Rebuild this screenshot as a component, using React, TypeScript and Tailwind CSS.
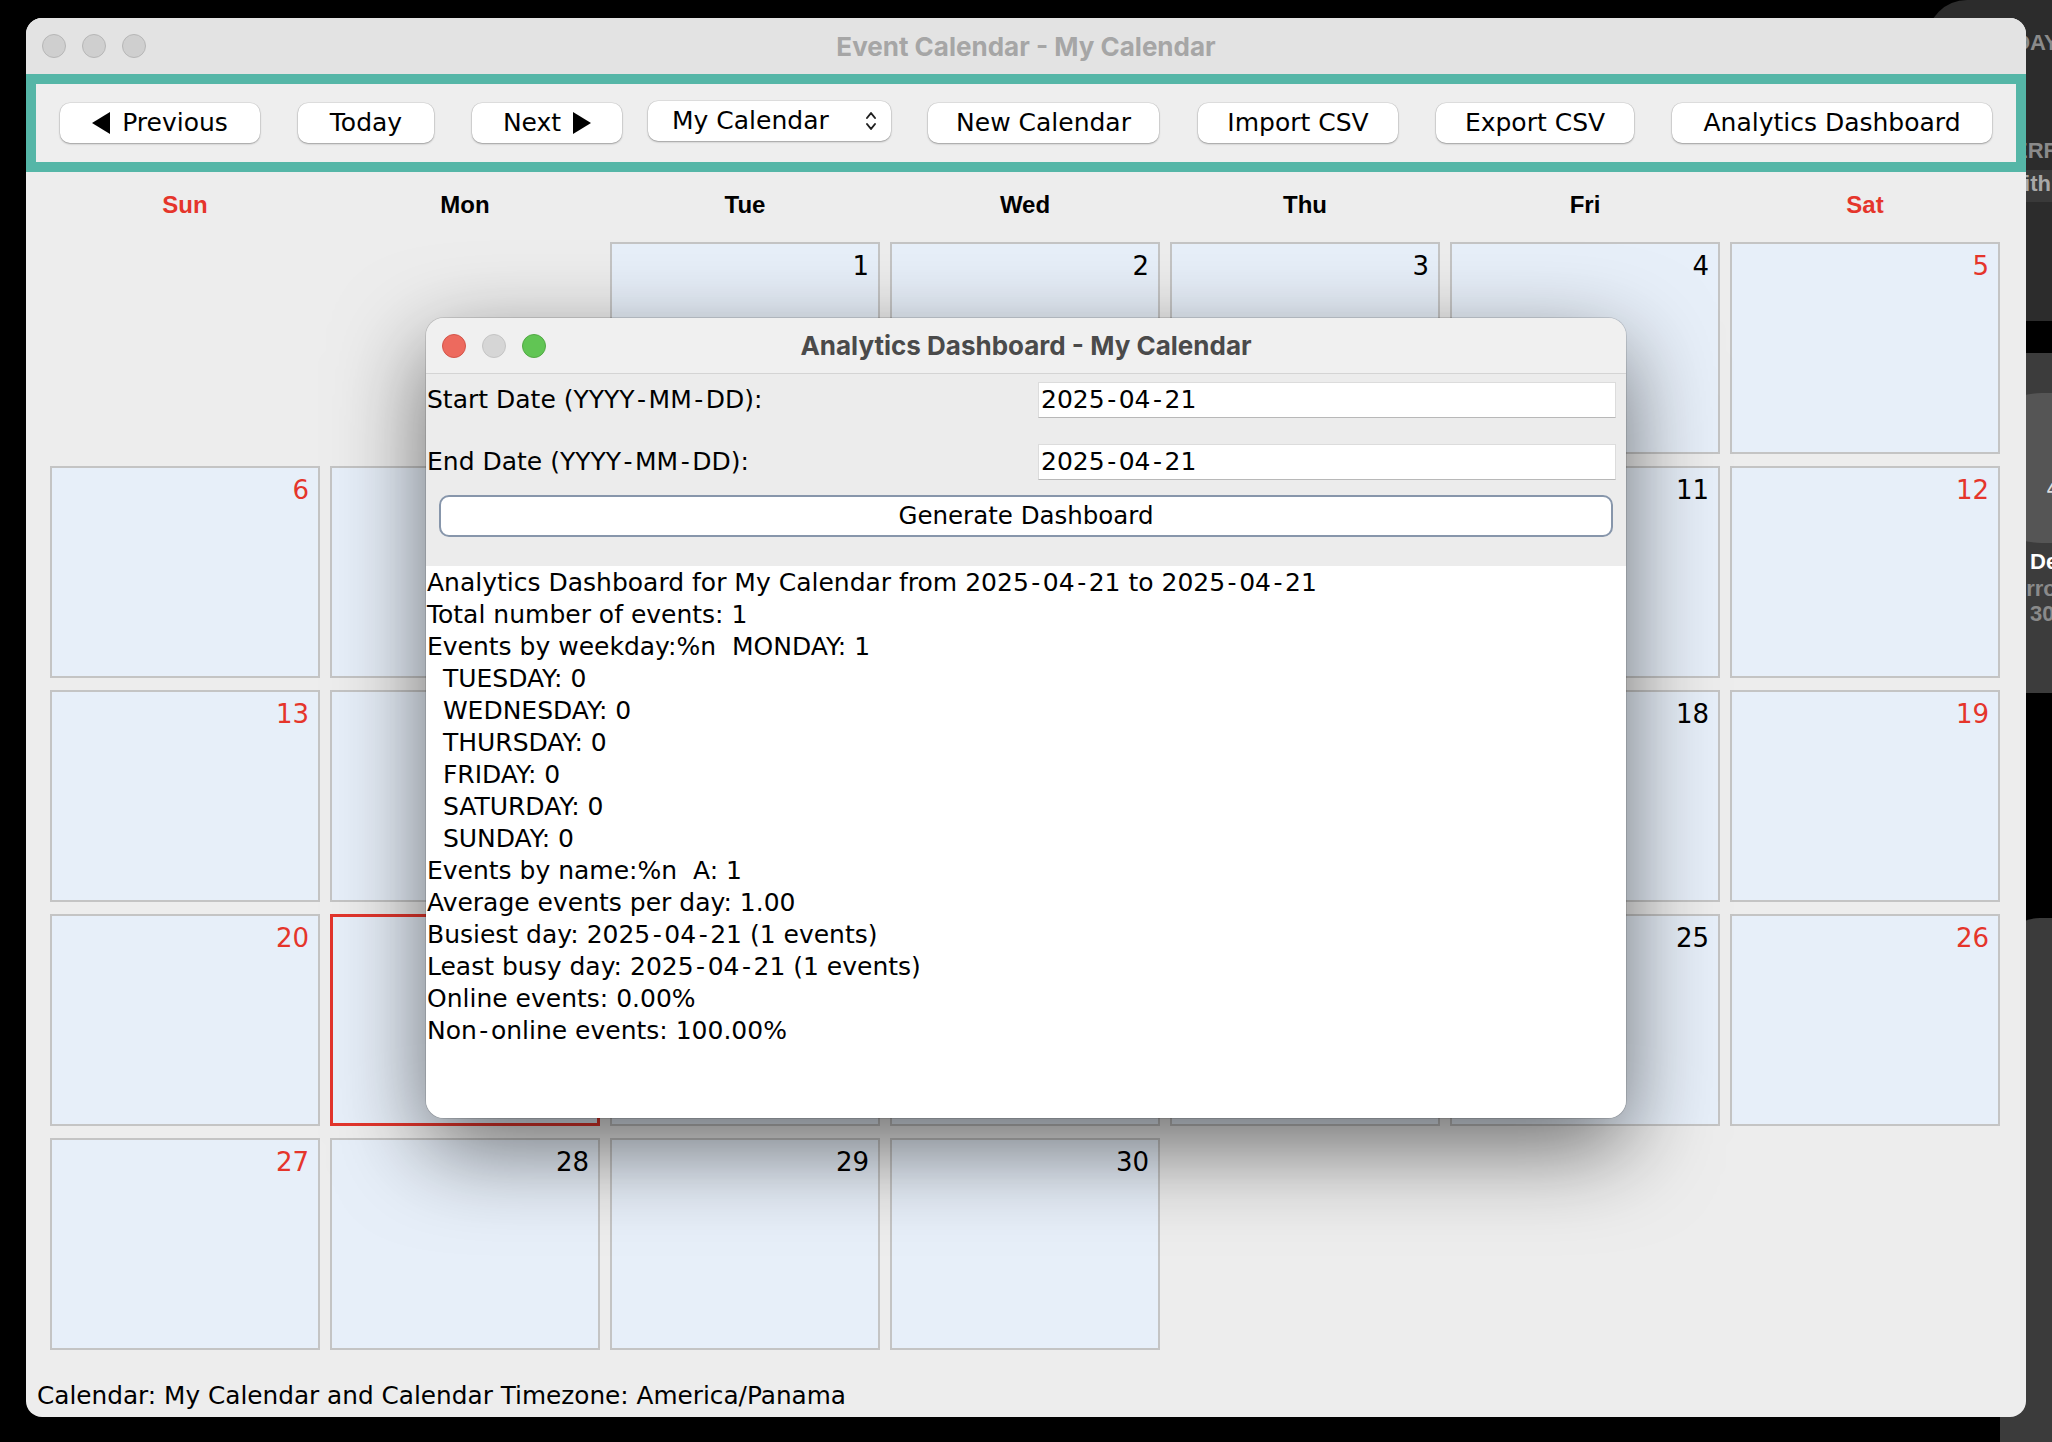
import React from "react";

type ToolButton = {
  label: string;
  width: string;
  margin: string;
  icon?: "left" | "right";
};

const toolButtons: ToolButton[] = [
  { label: "Previous", width: "w-[200px]", margin: "ml-0", icon: "left" },
  { label: "Today", width: "w-[136px]", margin: "ml-[38px]" },
  { label: "Next", width: "w-[150px]", margin: "ml-[38px]", icon: "right" },
];

const moreButtons: ToolButton[] = [
  { label: "New Calendar", width: "w-[231px]", margin: "ml-[37px]" },
  { label: "Import CSV", width: "w-[200px]", margin: "ml-[39px]" },
  { label: "Export CSV", width: "w-[198px]", margin: "ml-[38px]" },
  { label: "Analytics Dashboard", width: "w-[320px]", margin: "ml-[38px]" },
];

const weekdays = ["Sun", "Mon", "Tue", "Wed", "Thu", "Fri", "Sat"];

const report = [
  "Analytics Dashboard for My Calendar from 2025-04-21 to 2025-04-21",
  "Total number of events: 1",
  "Events by weekday:%n  MONDAY: 1",
  "  TUESDAY: 0",
  "  WEDNESDAY: 0",
  "  THURSDAY: 0",
  "  FRIDAY: 0",
  "  SATURDAY: 0",
  "  SUNDAY: 0",
  "Events by name:%n  A: 1",
  "Average events per day: 1.00",
  "Busiest day: 2025-04-21 (1 events)",
  "Least busy day: 2025-04-21 (1 events)",
  "Online events: 0.00%",
  "Non-online events: 100.00%",
];

// the Swing look-and-feel draws hyphens wider than DejaVu does
function Dashed({ text }: { text: string }) {
  const parts = text.split("-");
  return (
    <>
      {parts.map((p, i) => (
        <React.Fragment key={i}>
          {i > 0 && <span className="mx-[2.5px]">-</span>}
          {p}
        </React.Fragment>
      ))}
    </>
  );
}

function Triangle({ dir }: { dir: "left" | "right" }) {
  return (
    <svg width="18" height="22" viewBox="0 0 18 22" className="shrink-0">
      {dir === "left" ? (
        <path d="M18 0 L18 22 L0 11 Z" fill="#000" />
      ) : (
        <path d="M0 0 L0 22 L18 11 Z" fill="#000" />
      )}
    </svg>
  );
}

function Button({ b }: { b: ToolButton }) {
  return (
    <button
      className={`${b.width} ${b.margin} h-[40px] shrink-0 rounded-[10px] bg-white flex items-center justify-center gap-[12px] text-[25px] text-black shadow-[0_1px_2px_rgba(0,0,0,0.3),0_0_0_0.5px_rgba(0,0,0,0.12)]`}
    >
      {b.icon === "left" && <Triangle dir="left" />}
      <span>{b.label}</span>
      {b.icon === "right" && <Triangle dir="right" />}
    </button>
  );
}

function DayCell({ day, red, today }: { day: number; red: boolean; today?: boolean }) {
  return (
    <div
      className={`flex justify-end bg-[#e7eff9] ${
        today ? "border-[3px] border-[#e2352c] pt-[8px] pr-[8px]" : "border-2 border-[#c4c4c4] pt-[9px] pr-[9px]"
      }`}
    >
      <span className={`text-[26px] leading-none ${red ? "text-[#e5352b]" : "text-black"}`}>{day}</span>
    </div>
  );
}

function Lights({ active }: { active: boolean }) {
  const colors = active
    ? ["bg-[#ed6a5e] border-[#d35449]", "bg-[#d6d6d6] border-[#c4c4c4]", "bg-[#61c554] border-[#52a944]"]
    : ["bg-[#cfcfcf] border-[#b6b6b6]", "bg-[#cfcfcf] border-[#b6b6b6]", "bg-[#cfcfcf] border-[#b6b6b6]"];
  return (
    <div className="absolute left-[16px] top-1/2 -translate-y-1/2 flex gap-[16px]">
      {colors.map((c, i) => (
        <div key={i} className={`w-[24px] h-[24px] rounded-full border ${c}`} />
      ))}
    </div>
  );
}

export default function App() {
  const cells: (number | null)[] = [null, null];
  for (let d = 1; d <= 30; d++) cells.push(d);

  return (
    <div className="relative w-[2052px] h-[1442px] overflow-hidden bg-black font-['DejaVu_Sans',sans-serif] text-black">
      {/* desktop widgets peeking out at the right */}
      <div className="absolute left-[1927px] top-0 w-[200px] h-[321px] rounded-tl-[40px] bg-[#2c2c2c] font-['Liberation_Sans',sans-serif] font-bold text-[22px]">
        <div className="absolute left-[57px] top-[26px] text-[#8a8a8a]">TODAY</div>
        <div className="absolute left-[86px] top-[134px] text-[#8a8a8a]">ERRORS</div>
        <div className="absolute left-0 top-[170px] w-full h-[32px] bg-[#3a3a3a]" />
        <div className="absolute left-[80px] top-[168px] leading-[32px] text-[#a8a8a8]">with Data</div>
      </div>
      <div className="absolute left-[1927px] top-[353px] w-[200px] h-[340px] rounded-l-[40px] bg-[#3c3c3c] font-['Liberation_Sans',sans-serif] font-bold text-[22px]">
        <div className="absolute left-[40px] top-[40px] w-[170px] h-[150px] rounded-full bg-[#555555]" />
        <div className="absolute left-[150px] top-[60px] w-[2px] h-[50px] rotate-[20deg] bg-white" />
        <div className="absolute left-[120px] top-[125px] text-[16px] text-[#dddddd]">4 5</div>
        <div className="absolute left-[103px] top-[192px] text-white">Delhi</div>
        <div className="absolute left-[41px] top-[219px] text-[#8a8a8a]">Tomorrow</div>
        <div className="absolute left-[103px] top-[244px] text-[#8a8a8a]">30</div>
      </div>
      <div className="absolute left-[2000px] top-[918px] w-[200px] h-[600px] rounded-tl-[40px] bg-[#3b3b3b]" />

      {/* main window */}
      <div className="absolute left-[26px] top-[18px] w-[2000px] h-[1399px] rounded-[16px] overflow-hidden bg-[#ededed] flex flex-col">
        <div className="relative h-[56px] shrink-0 bg-[#e3e3e3] flex items-center justify-center">
          <Lights active={false} />
          <span className="font-['Inter',sans-serif] font-bold text-[26px] text-[#a6a6a6]">Event Calendar - My Calendar</span>
        </div>

        <div className="h-[98px] shrink-0 border-[10px] border-[#55b6a7] bg-[#eeeeee] flex items-center pl-[24px]">
          {toolButtons.map((b) => (
            <Button key={b.label} b={b} />
          ))}
          <div className="ml-[26px] mb-[4px] w-[243px] h-[40px] shrink-0 rounded-[10px] bg-white flex items-center pl-[24px] pr-[14px] text-[25px] shadow-[0_1px_2px_rgba(0,0,0,0.3),0_0_0_0.5px_rgba(0,0,0,0.12)]">
            <span className="flex-1">My Calendar</span>
            <svg width="12" height="22" viewBox="0 0 12 22">
              <path d="M2 8 L6 3 L10 8" stroke="#222" strokeWidth="2" fill="none" strokeLinecap="round" strokeLinejoin="round" />
              <path d="M2 14 L6 19 L10 14" stroke="#222" strokeWidth="2" fill="none" strokeLinecap="round" strokeLinejoin="round" />
            </svg>
          </div>
          {moreButtons.map((b) => (
            <Button key={b.label} b={b} />
          ))}
        </div>

        <div className="h-[70px] shrink-0 grid grid-cols-[repeat(7,270px)] gap-x-[10px] px-[24px] pb-[4px] items-center">
          {weekdays.map((d, i) => (
            <div
              key={d}
              className={`text-center font-['Liberation_Sans',Arial,sans-serif] font-bold text-[24px] ${
                i === 0 || i === 6 ? "text-[#e5352b]" : "text-black"
              }`}
            >
              {d}
            </div>
          ))}
        </div>

        <div className="grid grid-cols-[repeat(7,270px)] auto-rows-[212px] gap-x-[10px] gap-y-[12px] px-[24px]">
          {cells.map((d, i) =>
            d === null ? (
              <div key={`e${i}`} />
            ) : (
              <DayCell key={d} day={d} red={i % 7 === 0 || i % 7 === 6} today={d === 21} />
            )
          )}
        </div>

        <div className="pt-[30px] pl-[11px] text-[24.75px] leading-[32px]">
          Calendar: My Calendar and Calendar Timezone: America/Panama
        </div>
      </div>

      {/* analytics dialog */}
      <div className="absolute left-[426px] top-[318px] w-[1200px] h-[800px] rounded-[18px] overflow-hidden bg-[#ececec] flex flex-col shadow-[0_30px_90px_rgba(0,0,0,0.55),0_0_0_1px_rgba(0,0,0,0.12)]">
        <div className="relative h-[56px] shrink-0 bg-[#f0f0f0] border-b border-[#d4d4d4] flex items-center justify-center">
          <Lights active />
          <span className="font-['Inter',sans-serif] font-bold text-[26px] text-[#4a4a4a]">
            Analytics Dashboard - My Calendar
          </span>
        </div>

        <div className="pt-[8px] grid grid-cols-[612px_578px] auto-rows-[36px] gap-y-[26px] text-[25px]">
          <div className="flex items-center pl-[1px]">
            <span><Dashed text="Start Date (YYYY-MM-DD):" /></span>
          </div>
          <div className="flex items-center bg-white border border-[#dcdcdc] border-b-[#b8b8b8] pl-[2px]">
            <span><Dashed text="2025-04-21" /></span>
          </div>
          <div className="flex items-center pl-[1px]">
            <span><Dashed text="End Date (YYYY-MM-DD):" /></span>
          </div>
          <div className="flex items-center bg-white border border-[#dcdcdc] border-b-[#b8b8b8] pl-[2px]">
            <span><Dashed text="2025-04-21" /></span>
          </div>
        </div>

        <button className="mt-[15px] mx-[13px] h-[42px] shrink-0 rounded-[10px] border-2 border-[#8796ab] bg-white text-[24.5px] flex items-center justify-center">
          Generate Dashboard
        </button>

        <div className="mt-[29px] flex-1 bg-white pt-[1px] pl-[1px] text-[25px] leading-[32px] whitespace-pre">
          {report.map((line, i) => (
            <div key={i}>
              <Dashed text={line} />
            </div>
          ))}
        </div>
      </div>
    </div>
  );
}
